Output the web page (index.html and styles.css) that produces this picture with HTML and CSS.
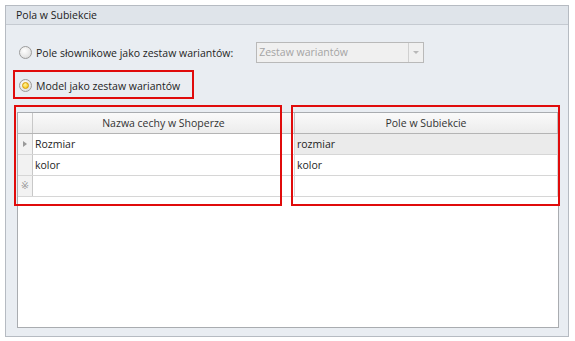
FILE: index.html
```html
<!DOCTYPE html>
<html lang="pl">
<head>
    <meta charset="UTF-8">
    <title>Pola w Subiekcie</title>
    <link rel="stylesheet" href="styles.css">
</head>
<body>
    <div class="shot">
        <div class="panel">
            <div class="panel-header">Pola w Subiekcie</div>
            <div class="panel-body">
                <div class="option-row">
                    <span class="radio"></span>
                    <span class="label">Pole słownikowe jako zestaw wariantów:</span>
                    <div class="combo">
                        <span class="combo-text">Zestaw wariantów</span>
                        <span class="combo-btn"><span class="arrow"></span></span>
                    </div>
                </div>
                <div class="option-row">
                    <span class="radio radio-checked"></span>
                    <span class="label">Model jako zestaw wariantów</span>
                </div>

                <div class="grid">
                    <div class="grid-row grid-head">
                        <div class="cell ind"></div>
                        <div class="cell col1">Nazwa cechy w Shoperze</div>
                        <div class="cell col2">Pole w Subiekcie</div>
                    </div>
                    <div class="grid-row row-focused">
                        <div class="cell ind"><span class="tri"></span></div>
                        <div class="cell col1 cell-focused">Rozmiar</div>
                        <div class="cell col2">rozmiar</div>
                    </div>
                    <div class="grid-row">
                        <div class="cell ind"></div>
                        <div class="cell col1">kolor</div>
                        <div class="cell col2">kolor</div>
                    </div>
                    <div class="grid-row">
                        <div class="cell ind new-row">&#x203B;</div>
                        <div class="cell col1"></div>
                        <div class="cell col2"></div>
                    </div>
                </div>
            </div>
        </div>

        <!-- zaznaczenia -->
        <div class="mark mark-radio"></div>
        <div class="mark mark-left"></div>
        <div class="mark mark-right"></div>
    </div>
</body>
</html>
```

FILE: styles.css
```css
body {
    margin: 0;
    background: #fff;
    font-family: "Open Sans", "Noto Sans", sans-serif;
    font-size: 10.5px;
    color: #1e1e1e;
}
.shot {
    position: relative;
    width: 575px;
    height: 341px;
}
.panel {
    position: absolute;
    left: 5px;
    top: 5px;
    width: 562px;
    height: 330px;
    border: 1px solid #b6bbc2;
    background: #e9edf2;
    display: flex;
    flex-direction: column;
}
.panel-header {
    height: 18px;
    line-height: 18px;
    padding-left: 10px;
    background: #dfe4ea;
    border-bottom: 1px solid #c5cad1;
    color: #222;
}
.panel-body {
    flex: 1;
    display: flex;
    flex-direction: column;
    padding: 17px 9px 8px 11px;
}
.option-row {
    display: flex;
    align-items: center;
    height: 21px;
    margin-bottom: 12px;
}
.option-row + .option-row {
    margin-bottom: 16px;
}
.radio {
    width: 11px;
    height: 11px;
    margin-left: 2px;
    border: 1px solid #9c9c9c;
    border-radius: 50%;
    background: radial-gradient(circle at 40% 35%, #ffffff 0%, #e6e6e6 60%, #cfcfcf 100%);
    position: relative;
}
.radio-checked::after {
    content: "";
    position: absolute;
    left: 2px;
    top: 2px;
    width: 5px;
    height: 5px;
    border: 1px solid #d89a00;
    border-radius: 50%;
    background: radial-gradient(circle at 40% 35%, #fff3a0, #f5c000);
}
.label {
    margin-left: 4px;
}
.combo {
    margin-left: 23px;
    width: 166px;
    height: 19px;
    border: 1px solid #b9b9b9;
    background: #f0f0f0;
    display: flex;
}
.combo-text {
    flex: 1;
    padding-left: 2px;
    line-height: 19px;
    color: #a4a4a4;
}
.combo-btn {
    width: 14px;
    border-left: 1px solid #d0d0d0;
    display: flex;
    align-items: center;
    justify-content: center;
}
.arrow {
    width: 0;
    height: 0;
    border-left: 3px solid transparent;
    border-right: 3px solid transparent;
    border-top: 3px solid #b8b8b8;
}
.grid {
    flex: 1;
    border: 1px solid #a9acb0;
    background: #fff;
}
.grid-row {
    display: flex;
    height: 20px;
    border-bottom: 1px solid #d6d6d6;
}
.grid-head {
    background: linear-gradient(#fafafa, #ececec);
    border-bottom: 1px solid #b4b4b4;
}
.cell {
    line-height: 20px;
    padding-left: 2px;
    white-space: nowrap;
}
.ind {
    width: 14px;
    border-right: 1px solid #c8c8c8;
    background: #f2f2f2;
    display: flex;
    align-items: center;
    justify-content: center;
    padding-left: 0;
}
.grid-head .ind {
    background: transparent;
}
.col1 {
    width: 259px;
    border-right: 1px solid #d6d6d6;
}
.col2 {
    width: 260px;
    border-right: 1px solid #d6d6d6;
}
.grid-head .col1,
.grid-head .col2 {
    text-align: center;
    padding-left: 0;
    color: #333;
    border-right-color: #c0c0c0;
}
.grid-head .col1 { width: 261px; }
.grid-head .col2 { width: 262px; }
.row-focused {
    background: #ebebeb;
}
.cell-focused {
    background: #fff;
}
.tri {
    width: 0;
    height: 0;
    border-top: 3px solid transparent;
    border-bottom: 3px solid transparent;
    border-left: 4px solid #9a9a9a;
}
.new-row {
    color: #9a9a9a;
    font-family: "DejaVu Sans", sans-serif;
    font-size: 10px;
}
.mark {
    position: absolute;
    border: 2px solid #e00b0b;
}
.mark-radio {
    left: 13px;
    top: 70px;
    width: 177px;
    height: 25px;
}
.mark-left {
    left: 14px;
    top: 105px;
    width: 264px;
    height: 97px;
}
.mark-right {
    left: 291px;
    top: 105px;
    width: 265px;
    height: 97px;
}
```
